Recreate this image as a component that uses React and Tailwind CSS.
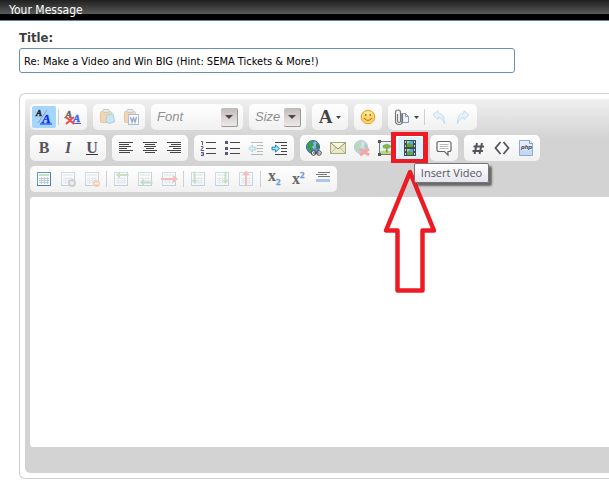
import React from "react";

const Svg = ({ children, w = 16, className = "" }) => (
  <svg width={w} height="16" viewBox={`0 0 ${w} 16`} fill="none" className={`overflow-visible ${className}`} aria-hidden="true">
    {children}
  </svg>
);

const Group = ({ children, label }) => (
  <div
    role="group"
    aria-label={label}
    className="flex h-[26px] shrink-0 items-center rounded-[5px] bg-linear-to-b from-white to-[#f1f1f1] p-0.5"
  >
    {children}
  </div>
);

const Btn = ({ label, children, className = "w-6" }) => (
  <button
    type="button"
    aria-label={label}
    className={`flex h-[22px] shrink-0 items-center justify-center rounded-xs text-[#55555c] ${className}`}
  >
    {children}
  </button>
);

const Sep = () => <span className="mx-0.5 h-4 w-px shrink-0 bg-[#cfcfcf]" />;

const Picker = ({ label, className }) => (
  <label className={`flex h-[22px] items-center pr-[3px] pl-1 ${className}`}>
    <select
      aria-label={label}
      className="min-w-0 flex-1 appearance-none bg-transparent font-['Liberation_Sans',Arial,sans-serif] text-[13px] leading-5 text-[#8f8f8f] italic outline-none"
    >
      <option>{label}</option>
    </select>
    <span className="flex h-[19px] w-[17px] shrink-0 items-center justify-center rounded-xs border-r border-b border-[#999] bg-linear-to-b from-[#c3b9b9] to-[#eeeaea]">
      <svg width="8" height="4" viewBox="0 0 8 4" aria-hidden="true">
        <path d="M0 0h8L4 4z" fill="#4d4848" />
      </svg>
    </span>
  </label>
);

const Caret = () => (
  <svg width="5" height="3" viewBox="0 0 5 3" className="ml-1" aria-hidden="true">
    <path d="M0 0h5L2.500 3z" fill="#444" />
  </svg>
);

const Align = ({ rows, className }) => (
  <Svg className={className}>
    {rows.map(([x, w], i) => (
      <rect key={i} x={x} y={2 + i * 2} width={w} height="1" fill="#444" />
    ))}
  </Svg>
);

const Clipboard = ({ children }) => (
  <Svg className="opacity-50">
    <rect x="1.500" y="2.500" width="11" height="11" rx="1" fill="#eeb56c" stroke="#cf9552" />
    <rect x="4" y="0.500" width="6" height="3" rx="1" fill="#d8d8d8" stroke="#999" />
    {children}
  </Svg>
);

const Indent = ({ out }) => (
  <Svg className={out ? "opacity-35" : ""}>
    <path d="M3 2.500h12M9 5.500h6M9 8.500h6M9 11.500h6M3 14.500h12" stroke="#444" />
    {out ? (
      <path d="M.5 8.500 4.500 5v2.200H8v2.600H4.500V12z" fill="#a8e3f8" stroke="#259dc8" />
    ) : (
      <path d="M7.500 8.500 3.500 5v2.200H0v2.600h3.500V12z" fill="#a8e3f8" stroke="#1687b8" />
    )}
  </Svg>
);

const Globe = ({ children }) => (
  <>
    <circle cx="7" cy="7" r="6.500" fill="#5d85dc" stroke="#3c5fae" />
    <circle cx="8" cy="5" r="3.500" fill="#a9c4f5" opacity=".7" />
    <path d="M1.500 4 4 1l4 .3-1 2 1 1.500L6 7l1 2-2 3.500-2.500-2L1 7z" fill="#35a047" />
    <path d="m10.500 3 2.300 2 .4 3-2 1.500-1.500-3z" fill="#2f8a3d" />
    {children}
  </>
);

const Grid = ({ active, children }) => (
  <Svg className={active ? "" : "opacity-30"}>
    <rect x="1.500" y="1.500" width="13" height="13" fill="#fff" stroke="#6296cf" />
    <path d="M1 14.500h13.500V1" stroke="#4a7db8" />
    <path d="M3 4h10" stroke="#8cc480" />
    <path d="M3 7.500h10M3 9.500h10M3 11.500h10M5.500 6v7M8.500 6v7M11.500 6v7" stroke="#bccbd9" />
    {children}
  </Svg>
);

const Film = () => (
  <Svg>
    <rect x="2" y="0" width="12" height="16" fill="#454a50" />
    <rect x="5" y="1" width="6" height="6" fill="#45b4f2" />
    <rect x="5" y="9" width="6" height="6" fill="#45b4f2" />
    <path d="M5 4q3-2 6 1v2H5zM5 12q3-2 6 1v2H5z" fill="#5aa83c" />
    <path d="M5 1h3L5 4zM5 9h3l-3 3z" fill="#c9dc62" />
    <path d="M3.500 1v15M12.500 1v15" stroke="#c9d2d8" strokeDasharray="2 2" />
  </Svg>
);

function VideoButton() {
  return (
    <div className="relative z-10">
      <button
        type="button"
        aria-label="Insert Video"
        aria-describedby="video-tip"
        className="flex h-[22px] w-6 items-center justify-center rounded-xs bg-[#dcf0fd]"
      >
        <Film />
      </button>
      <span className="pointer-events-none absolute -top-[5px] -left-[7px] h-[31px] w-[37px] border-x-5 border-y-4 border-[#ed1c24]" />
      <svg
        width="54"
        height="124"
        viewBox="0 0 54 124"
        fill="none"
        className="pointer-events-none absolute top-8 -left-[15px] max-w-none"
        aria-hidden="true"
      >
        <path d="M27 3 3 61.500h11.500v60h25v-60H51z" stroke="#ed1c24" strokeWidth="4.500" strokeLinejoin="round" />
      </svg>
      <span
        id="video-tip"
        role="tooltip"
        className="absolute top-[26px] left-4 flex h-5 w-[75px] items-center justify-center rounded-xs border border-[#767676] bg-linear-to-b from-white to-[#e4e5f0] font-['Open_Sans','Noto_Sans',sans-serif] text-[11px] whitespace-nowrap text-[#575757] shadow-[3px_3px_2px_rgba(0,0,0,0.5)]"
      >
        Insert Video
      </span>
    </div>
  );
}

export default function App() {
  return (
    <main className="bg-white pb-1.5 font-['DejaVu_Sans_Condensed','DejaVu_Sans','Noto_Sans',sans-serif]">
      <header className="border-b border-[#5c87a8] bg-black">
        <div className="h-3.5 bg-linear-to-b from-[#202020] to-[#5a5a5a]" />
        <h1 className="-mt-3.5 h-5 pl-[9px] text-xs leading-5 text-white">Your Message</h1>
      </header>

      <form className="pt-2.5 pl-[19px]">
        <label htmlFor="title" className="block pb-1 text-[13px] leading-[13px] font-bold text-[#3e3e3e]">
          Title:
        </label>
        <input
          id="title"
          type="text"
          defaultValue="Re: Make a Video and Win BIG (Hint: SEMA Tickets & More!)"
          className="block h-[25px] w-full max-w-[496px] rounded-[3px] border border-[#6690b0] bg-white px-1 pt-0.5 text-[11px] text-black outline-none"
        />

        <section
          aria-label="Message editor"
          className="mt-5 rounded-l-md border border-r-0 border-[#cfcfcf] bg-white py-[5px] pl-[5px]"
        >
          <div className="rounded-l-[5px] bg-[#d3d3d3] pb-[26px]">
            <div className="flex flex-col gap-[5px] rounded-tl-[5px] bg-linear-to-b from-[#f0f0f0] to-[#d3d3d3] to-40% pt-[5px] pb-[5px] pl-[5px]">
              <div className="flex gap-1.5">
                <Group label="Mode">
                  <Btn label="Switch editor mode" className="w-6 bg-[#a4d6ff]">
                    <Svg>
                      <text x="0" y="7" fontSize="9" fontWeight="bold" fontStyle="italic" fontFamily="Liberation Serif" stroke="#222" strokeWidth=".4" fill="#222">A</text>
                      <path d="M11 1 2 14" stroke="#999" />
                      <text x="6" y="14" fontSize="13" fontWeight="bold" fontStyle="italic" fontFamily="Liberation Serif" stroke="#0a2ff0" strokeWidth=".4" fill="#0a2ff0">A</text>
                      <path d="M4 15h12" stroke="#0a2ff0" />
                    </Svg>
                  </Btn>
                  <Sep />
                  <Btn label="Remove formatting">
                    <Svg>
                      <text x="0" y="9" fontSize="11" fontStyle="italic" fontWeight="bold" fontFamily="Liberation Serif" stroke="#666" strokeWidth=".4" fill="#666">A</text>
                      <text x="8" y="13" fontSize="11" fontWeight="bold" fontStyle="italic" fontFamily="Liberation Serif" stroke="#3d62ea" strokeWidth=".4" fill="#3d62ea">A</text>
                      <path d="M8 14.500h8" stroke="#3d62ea" />
                      <path d="m1 8 8 7M9 8l-8 7" stroke="#f04646" strokeWidth="1.700" />
                    </Svg>
                  </Btn>
                </Group>
                <Group label="Paste">
                  <Btn label="Paste as plain text">
                    <Clipboard>
                      <path d="m8 6 6-1 1.500 8-6 1.500L7 12z" fill="#9fd3ec" stroke="#5ea7cb" />
                    </Clipboard>
                  </Btn>
                  <Btn label="Paste from Word">
                    <Clipboard>
                      <rect x="5.500" y="5.500" width="10" height="10" fill="#fff" stroke="#5c86bb" />
                      <path d="m7.500 8 1.500 5 1.500-4 1.500 4 1.500-5" stroke="#35649e" strokeWidth="1.400" />
                    </Clipboard>
                  </Btn>
                </Group>
                <Group label="Font family">
                  <Picker label="Font" className="w-[88px]" />
                </Group>
                <Group label="Font size">
                  <Picker label="Size" className="w-[53px]" />
                </Group>
                <Group label="Text color">
                  <Btn label="Text color" className="w-8">
                    <span className="font-['Liberation_Serif',serif] text-[19px] leading-5 font-bold text-[#444]">A</span>
                    <Caret />
                  </Btn>
                </Group>
                <Group label="Smilies">
                  <Btn label="Smilies">
                    <Svg>
                      <circle cx="8" cy="8" r="6.800" fill="#fbd563" stroke="#dba038" />
                      <ellipse cx="8" cy="5" rx="4.500" ry="2.500" fill="#fff0b0" opacity=".6" />
                      <path d="M4 9q4 5 8 0" stroke="#a5701f" strokeWidth="1.100" />
                      <path d="M5.800 5v2M10.200 5v2" stroke="#8a5d1c" strokeWidth="1.200" />
                    </Svg>
                  </Btn>
                </Group>
                <Group label="Attachments and history">
                  <Btn label="Attachments" className="w-8">
                    <Svg>
                      <path d="M7.500 4.500h4l3 3v6h-7z" fill="#eef4fb" stroke="#8997aa" />
                      <path d="M11.500 4.500v3h3" stroke="#8997aa" />
                      <path d="M3.500 5v7q0 1.500 1.500 1.500T6.500 12V3.500Q6.500 1 4 1T1.500 3.500V12q0 3.500 3.500 3.500T8.500 12V5" stroke="#777" strokeWidth="1.200" />
                    </Svg>
                    <Caret />
                  </Btn>
                  <Sep />
                  <Btn label="Undo">
                    <Svg className="opacity-40">
                      <path d="M2 6 7 1.500V4q7 .5 6.500 11Q12 9 7 8.500v2z" fill="#c9eafa" stroke="#6dbbe0" />
                    </Svg>
                  </Btn>
                  <Btn label="Redo">
                    <Svg className="opacity-40">
                      <path d="M14 6 9 1.500V4Q2 4.500 2.500 15 4 9 9 8.500v2z" fill="#c9eafa" stroke="#6dbbe0" />
                    </Svg>
                  </Btn>
                </Group>
              </div>

              <div className="flex gap-1.5">
                <Group label="Text style">
                  <Btn label="Bold">
                    <span className="font-['Liberation_Serif',serif] text-base leading-5 font-bold">B</span>
                  </Btn>
                  <Btn label="Italic">
                    <span className="font-['Liberation_Serif',serif] text-base leading-5 font-bold italic">I</span>
                  </Btn>
                  <Btn label="Underline">
                    <span className="border-b border-[#333] font-['Liberation_Serif',serif] text-base leading-[13px] font-bold">U</span>
                  </Btn>
                </Group>
                <Group label="Alignment">
                  <Btn label="Align left">
                    <Align rows={[[1, 14], [1, 10], [1, 12], [1, 8], [1, 14], [1, 11]]} />
                  </Btn>
                  <Btn label="Align center">
                    <Align rows={[[1, 14], [3, 10], [2, 12], [4, 8], [1, 14], [3, 10]]} />
                  </Btn>
                  <Btn label="Align right">
                    <Align rows={[[1, 14], [5, 10], [3, 12], [7, 8], [1, 14], [4, 11]]} />
                  </Btn>
                </Group>
                <Group label="Lists">
                  <Btn label="Ordered list">
                    <Svg>
                      <path d="M6 2.500h10M6 8.500h10M6 13.500h10" stroke="#444" />
                      <path d="M1 1.500h1.500V5M1 6.500h2v1.500l-2 1.500v1h3M1 12.500h2.500v3H1M1.500 14h2" stroke="#5c5878" />
                    </Svg>
                  </Btn>
                  <Btn label="Unordered list">
                    <Svg>
                      <path d="M6 2.500h10M6 8.500h10M6 13.500h10" stroke="#444" />
                      <path d="M1 1h3v3H1zM1 7h3v3H1zM1 12h3v3H1z" fill="#5c5878" />
                    </Svg>
                  </Btn>
                  <Btn label="Outdent"><Indent out /></Btn>
                  <Btn label="Indent"><Indent /></Btn>
                </Group>
                <Group label="Insert">
                  <Btn label="Insert link">
                    <Svg>
                      <Globe>
                        <circle cx="7.500" cy="13" r="2.300" fill="#eee" stroke="#444" />
                        <circle cx="13" cy="13" r="2.300" fill="#eee" stroke="#444" />
                        <path d="M7 13h6.500" stroke="#444" />
                      </Globe>
                    </Svg>
                  </Btn>
                  <Btn label="Insert email">
                    <Svg>
                      <rect x=".5" y="2.500" width="15" height="11" fill="#e9e9c6" stroke="#a9a982" />
                      <path d="M1 13l5-5.500M15 13l-5-5.500" stroke="#bdbd98" />
                      <path d="m1 3 7 6 7-6z" fill="#f8f8e2" />
                      <path d="m1 3 7 6 7-6" stroke="#8e8e6c" />
                    </Svg>
                  </Btn>
                  <Btn label="Remove link">
                    <Svg className="opacity-35">
                      <Globe>
                        <path d="m6 9 9 6M15 9l-9 6" stroke="#f01010" strokeWidth="3" />
                      </Globe>
                    </Svg>
                  </Btn>
                  <Btn label="Insert image">
                    <Svg>
                      <rect x="1.500" y="1.500" width="13" height="13" fill="#e8f4fb" stroke="#777" />
                      <path d="M2 11.500q5-2 12 0V14H2z" fill="#b5dd78" />
                      <path d="M8 8h1.500v4.500H8z" fill="#a57a50" />
                      <path d="M4.500 7q0-2.500 2.500-2.500 1.800-1.500 3.500 0 2.500 0 2.500 2.500-1 2.200-4.200 1.600Q5 9.300 4.500 7z" fill="#7db552" />
                      <path d="M0 0h3v3H0zM13 0h3v3h-3zM0 13h3v3H0z" fill="#555" />
                    </Svg>
                  </Btn>
                  <VideoButton />
                </Group>
                <Group label="Quote">
                  <Btn label="Wrap quote">
                    <Svg>
                      <path d="M3 1.500h10q2 0 2 2v6q0 2-2 2h-1V15l-3.500-3.500H3q-2 0-2-2v-6q0-2 2-2z" fill="#fff" stroke="#666" strokeWidth="1.200" />
                      <path d="M3.500 4.500h9M3.500 6.500h9M3.500 8.500h9" stroke="#bbb" />
                    </Svg>
                  </Btn>
                </Group>
                <Group label="Code">
                  <Btn label="Wrap code">
                    <Svg>
                      <path d="M7 3 4.500 14M12 3 9.500 14M3.500 6.500H14M2.500 11H13" stroke="#55555c" strokeWidth="2" />
                    </Svg>
                  </Btn>
                  <Btn label="Wrap HTML">
                    <Svg>
                      <path d="M6.500 2 1.500 8l5 6M9.500 2l5 6-5 6" stroke="#55555c" strokeWidth="1.800" />
                    </Svg>
                  </Btn>
                  <Btn label="Wrap PHP">
                    <Svg>
                      <path d="M1.500.5h10l3 3v12h-13z" fill="#e3edfb" stroke="#8fa9d6" />
                      <path d="M2 10h12v5H2z" fill="#c5daf6" />
                      <path d="M11.500.5v3h3" fill="#fff" stroke="#7b9bd0" />
                      <text x="3" y="9" fontSize="6" fontWeight="bold" fontStyle="italic" fontFamily="Liberation Sans" fill="#333">php</text>
                    </Svg>
                  </Btn>
                </Group>
              </div>

              <div className="flex">
                <Group label="Table">
                  <Btn label="Insert table"><Grid active /></Btn>
                  <Btn label="Table properties">
                    <Grid>
                      <circle cx="12" cy="12" r="3" fill="#ddd" stroke="#777" strokeWidth="2" />
                    </Grid>
                  </Btn>
                  <Btn label="Delete table">
                    <Grid>
                      <circle cx="12.500" cy="12.500" r="3.500" fill="#f27a28" />
                      <path d="M10.500 12.500h4" stroke="#fff" strokeWidth="1.500" />
                    </Grid>
                  </Btn>
                  <Sep />
                  <Btn label="Insert row before">
                    <Grid>
                      <path d="M3 4 7 .5V3h8.500v2H7v2.500z" fill="#58a846" />
                    </Grid>
                  </Btn>
                  <Btn label="Insert row after">
                    <Grid>
                      <path d="m3 11.500 4-3.500v2.500h8.500v2H7V15z" fill="#58a846" />
                    </Grid>
                  </Btn>
                  <Btn label="Delete row">
                    <Grid>
                      <path d="M0 8h16M12 5l3.500 3-3.500 3" stroke="#ee3b3b" strokeWidth="2" />
                    </Grid>
                  </Btn>
                  <Sep />
                  <Btn label="Insert column before">
                    <Grid>
                      <path d="M4.500 13 1.500 9h2V.5h2V9h2z" fill="#58a846" />
                    </Grid>
                  </Btn>
                  <Btn label="Insert column after">
                    <Grid>
                      <path d="m11.500 13-3-4h2V.5h2V9h2z" fill="#58a846" />
                    </Grid>
                  </Btn>
                  <Btn label="Delete column">
                    <Grid>
                      <path d="M8 15V1M5.500 4 8 1l2.500 3" stroke="#ee3b3b" strokeWidth="2" />
                    </Grid>
                  </Btn>
                  <Sep />
                  <Btn label="Subscript">
                    <Svg>
                      <text x="1" y="10" fontSize="16" fontWeight="bold" fontFamily="Liberation Serif" fill="#666">x</text>
                      <text x="9" y="14" fontSize="9" fontWeight="bold" fontFamily="Liberation Serif" stroke="#6b9ce0" strokeWidth=".4" fill="#6b9ce0">2</text>
                    </Svg>
                  </Btn>
                  <Btn label="Superscript">
                    <Svg>
                      <text x="1" y="13" fontSize="16" fontWeight="bold" fontFamily="Liberation Serif" fill="#666">x</text>
                      <text x="9" y="7" fontSize="9" fontWeight="bold" fontFamily="Liberation Serif" stroke="#6b9ce0" strokeWidth=".4" fill="#6b9ce0">2</text>
                    </Svg>
                  </Btn>
                  <Btn label="Horizontal rule">
                    <Svg>
                      <path d="M3 1.500h12M1 3.500h11M3 5.500h12" stroke="#777" />
                      <rect x="1" y="8" width="14" height="3" fill="#a9c8ef" />
                    </Svg>
                  </Btn>
                </Group>
              </div>
            </div>
            <div className="pl-[5px]">
              <textarea
                aria-label="Message"
                className="block h-[250px] w-full resize-none rounded-l-[3px] bg-white p-2 text-xs outline-none"
              />
            </div>
          </div>
        </section>
      </form>
    </main>
  );
}
